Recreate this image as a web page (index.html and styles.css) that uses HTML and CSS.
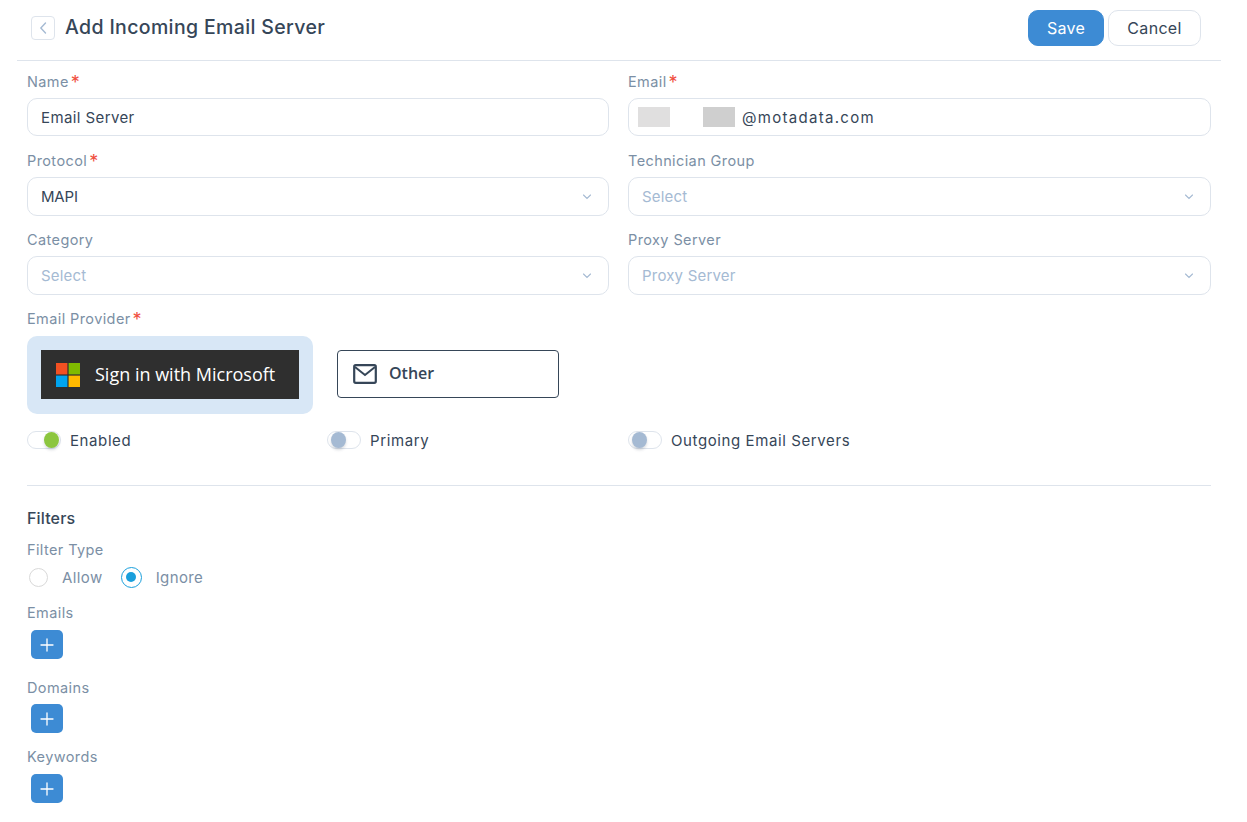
FILE: index.html
```html
<!DOCTYPE html>
<html lang="en">
<head>
<meta charset="utf-8">
<title>Add Incoming Email Server</title>
<link rel="stylesheet" href="styles.css">
</head>
<body>
<header class="topbar">
  <div class="title-group">
    <button class="back" aria-label="Back"><svg width="10" height="14" viewBox="0 0 10 14"><path d="M7.5 2 L2.8 7 L7.5 12" fill="none" stroke="#a5bad3" stroke-width="1.4" stroke-linecap="round" stroke-linejoin="round"/></svg></button>
    <h1>Add Incoming Email Server</h1>
  </div>
  <div class="actions">
    <button class="btn btn-primary">Save</button>
    <button class="btn btn-default">Cancel</button>
  </div>
</header>
<main class="form">
  <div class="grid">
    <div class="field">
      <label>Name<span class="req">*</span></label>
      <div class="control value-wide">Email Server</div>
    </div>
    <div class="field">
      <label>Email<span class="req">*</span></label>
      <div class="control control-email"><span class="mask mask-a"></span><span class="mask-gap"></span><span class="mask mask-b"></span><span class="email-domain">@motadata.com</span></div>
    </div>
    <div class="field">
      <label>Protocol<span class="req">*</span></label>
      <div class="control select value-tight">MAPI<svg class="chev" width="10" height="6" viewBox="0 0 10 6"><path d="M1.5 1 L5 4.5 L8.5 1" fill="none" stroke="#a5bad3" stroke-width="1.1" stroke-linecap="round"/></svg></div>
    </div>
    <div class="field">
      <label>Technician Group</label>
      <div class="control select placeholder">Select<svg class="chev" width="10" height="6" viewBox="0 0 10 6"><path d="M1.5 1 L5 4.5 L8.5 1" fill="none" stroke="#a5bad3" stroke-width="1.1" stroke-linecap="round"/></svg></div>
    </div>
    <div class="field">
      <label>Category</label>
      <div class="control select placeholder">Select<svg class="chev" width="10" height="6" viewBox="0 0 10 6"><path d="M1.5 1 L5 4.5 L8.5 1" fill="none" stroke="#a5bad3" stroke-width="1.1" stroke-linecap="round"/></svg></div>
    </div>
    <div class="field">
      <label>Proxy Server</label>
      <div class="control select placeholder">Proxy Server<svg class="chev" width="10" height="6" viewBox="0 0 10 6"><path d="M1.5 1 L5 4.5 L8.5 1" fill="none" stroke="#a5bad3" stroke-width="1.1" stroke-linecap="round"/></svg></div>
    </div>
  </div>

  <div class="provider">
    <label>Email Provider<span class="req">*</span></label>
    <div class="provider-row">
      <div class="provider-selected">
        <div class="ms-btn">
          <svg width="24" height="24" viewBox="0 0 24 24"><rect width="11.4" height="11.4" fill="#f25022"/><rect x="12.6" width="11.4" height="11.4" fill="#7fba00"/><rect y="12.6" width="11.4" height="11.4" fill="#00a4ef"/><rect x="12.6" y="12.6" width="11.4" height="11.4" fill="#ffb900"/></svg>
          <span class="ms-text">Sign in with Microsoft</span>
        </div>
      </div>
      <div class="other-btn">
        <svg width="24" height="20" viewBox="0 0 24 20"><rect x="1.2" y="1.2" width="21.6" height="17.6" rx="1.5" fill="none" stroke="#364658" stroke-width="2.2"/><path d="M2 3 L12 11 L22 3" fill="none" stroke="#364658" stroke-width="2"/></svg>
        <span class="other-text">Other</span>
      </div>
    </div>
  </div>

  <div class="toggles">
    <div class="toggle-item"><span class="toggle on"><i></i></span>Enabled</div>
    <div class="toggle-item"><span class="toggle"><i></i></span>Primary</div>
    <div class="toggle-item"><span class="toggle"><i></i></span>Outgoing Email Servers</div>
  </div>

  <hr class="divider">

  <h2>Filters</h2>
  <label class="filter-type">Filter Type</label>
  <div class="radios">
    <span class="radio"></span><span class="radio-label">Allow</span>
    <span class="radio checked"></span><span class="radio-label">Ignore</span>
  </div>

  <label class="tag-emails">Emails</label>
  <button class="add" aria-label="Add email"><svg width="14" height="14" viewBox="0 0 14 14"><path d="M7 1 V13 M1 7 H13" stroke="#fff" stroke-width="1.3" stroke-linecap="round"/></svg></button>
  <label class="tag-domains">Domains</label>
  <button class="add add-tight" aria-label="Add domain"><svg width="14" height="14" viewBox="0 0 14 14"><path d="M7 1 V13 M1 7 H13" stroke="#fff" stroke-width="1.3" stroke-linecap="round"/></svg></button>
  <label class="tag-keywords">Keywords</label>
  <button class="add" aria-label="Add keyword"><svg width="14" height="14" viewBox="0 0 14 14"><path d="M7 1 V13 M1 7 H13" stroke="#fff" stroke-width="1.3" stroke-linecap="round"/></svg></button>
</main>
</body>
</html>
```
FILE: styles.css
```css
* { box-sizing: border-box; }
html, body { margin: 0; height: 100%; overflow: hidden; }
body {
  background: #fff;
  color: #364658;
  font-family: "Inter", "Open Sans", sans-serif;
  font-size: 15px;
  width: 1247px;
}
label { display: block; color: #7b8fa5; font-size: 14.5px; line-height: 20px; letter-spacing: 0.4px; }
button { font-family: inherit; cursor: pointer; }
.req { color: #f04e3e; font-size: 18px; margin-left: 2px; line-height: 14px; vertical-align: -2px; }

.topbar {
  display: flex;
  justify-content: space-between;
  align-items: center;
  height: 61px;
  margin: 0 26px 0 17px;
  padding: 0 20px 5px 14px;
  border-bottom: 1px solid #dee4ec;
}
.title-group { display: flex; align-items: center; gap: 10px; }
.back {
  width: 24px; height: 24px; padding: 0;
  display: flex; align-items: center; justify-content: center;
  background: #fff;
  border: 1px solid #dee4ec;
  border-radius: 4px;
}
h1 { margin: 0 0 1px; font-size: 19.5px; font-weight: 500; color: #364658; letter-spacing: 0.36px; }
.actions { display: flex; gap: 4px; }
.btn {
  height: 36px;
  border-radius: 10px;
  font-size: 16px;
  letter-spacing: 0.3px;
  padding: 0;
}
.btn-primary { width: 76px; background: #3d8bd4; border: 1px solid #3d8bd4; color: #fff; }
.btn-default { width: 93px; background: #fff; border: 1px solid #dee4ec; color: #364658; }

.form { padding: 11px 36px 0 27px; }
.grid { display: grid; grid-template-columns: 582px 583px; column-gap: 19px; row-gap: 14px; }
.field label { height: 26px; }
.control {
  height: 39px;
  border: 1px solid #dee4ec;
  border-radius: 10px;
  padding: 0 13px;
  display: flex;
  align-items: center;
  font-size: 15px;
  letter-spacing: 0.2px;
  color: #364658;
  background: #fff;
}
.field:nth-child(-n+2) .control { height: 38px; }
.field:nth-child(-n+2) { margin-bottom: 1px; }
.value-wide { letter-spacing: 0.4px; }
.value-tight { letter-spacing: -0.2px; }
.select { justify-content: space-between; padding-right: 16px; }
.placeholder { color: #a5bad3; }
.control-email { padding-left: 9px; }
.mask { width: 32px; height: 20px; display: block; }
.mask-a { background: #e0dfdf; }
.mask-b { background: #cfcfcf; }
.mask-gap { width: 33px; }
.email-domain { margin-left: 7px; letter-spacing: 1.3px; }

.provider { margin-top: 14px; }
.provider > label { height: 27px; }
.provider-row { display: flex; align-items: flex-start; gap: 24px; }
.provider-selected {
  width: 286px; height: 78px;
  padding: 14px;
  background: #d8e7f6;
  border-radius: 10px;
}
.ms-btn {
  height: 49px;
  background: #2f2f2f;
  color: #fff;
  display: flex;
  align-items: center;
  gap: 15px;
  padding-left: 15px;
  font-family: "Open Sans", sans-serif;
  font-size: 18px;
  font-weight: 500;
}
.ms-text { padding-bottom: 2px; }
.other-btn {
  width: 222px; height: 48px;
  margin-top: 14px;
  border: 1px solid #364658;
  border-radius: 4px;
  display: flex;
  align-items: center;
  gap: 12px;
  padding-left: 15px;
  font-family: "Open Sans", sans-serif;
  font-size: 16px;
  font-weight: 600;
  color: #364658;
}
.other-text { padding-bottom: 2px; }

.toggles { display: grid; grid-template-columns: 300px 301px 1fr; margin-top: 16px; height: 20px; align-items: center; }
.toggle-item { display: flex; align-items: center; gap: 9px; color: #364658; font-size: 15px; letter-spacing: 0.6px; }
.toggle {
  width: 34px; height: 18px;
  border: 1px solid #dee4ec;
  border-radius: 9px;
  display: flex;
  align-items: center;
  padding: 0 2px;
  background: #fff;
}
.toggle i {
  width: 15px; height: 16px;
  border-radius: 50%;
  background: #a5bad3;
  box-shadow: 0 2px 3px rgba(54,70,88,.2);
  margin-left: 1px;
}
.toggle.on { justify-content: flex-end; }
.toggle.on i { background: #8cc63f; margin-left: 0; margin-right: -1px; }

.divider { border: 0; border-top: 1px solid #dee4ec; margin: 35px 0 0; }
h2 { margin: 21px 0 0; font-size: 16px; font-weight: 500; line-height: 22px; letter-spacing: 0.15px; color: #364658; }
.filter-type { margin-top: 11px; }
.radios { display: flex; align-items: center; margin: 7px 0 0 2px; height: 20px; color: #7b8fa5; }
.radio {
  width: 19px; height: 19px;
  border: 1px solid #d9d9d9;
  border-radius: 50%;
  background: #fff;
  display: flex; align-items: center; justify-content: center;
}
.radio.checked { border-color: #1a9fdc; width: 21px; height: 21px; }
.radio.checked::after { content: ""; width: 10px; height: 10px; border-radius: 50%; background: #1a9fdc; }
.radio-label { margin-left: 14px; margin-right: 18px; font-size: 15px; letter-spacing: 0.4px; }
.tag-emails { margin-top: 16px; }
.tag-domains { margin-top: 19px; }
.tag-keywords { margin-top: 14px; }
.add {
  display: flex; align-items: center; justify-content: center;
  width: 32px; height: 29px; padding: 0;
  margin: 7px 0 0 4px;
  background: #3d8bd4;
  border: 0;
  border-radius: 5px;
}
.add-tight { margin-top: 6px; }
```
